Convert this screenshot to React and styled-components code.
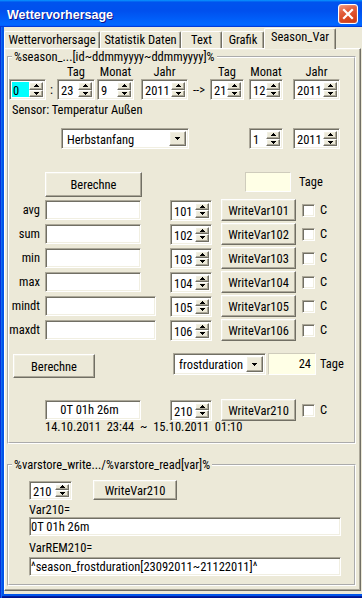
import React from "react";
import styled, { createGlobalStyle, css } from "styled-components";

const GlobalStyle = createGlobalStyle`
  * { box-sizing: border-box; }
  html, body { margin: 0; padding: 0; background: #fff; }
  body {
    font-family: Roboto, "Liberation Sans", Arial, sans-serif;
    font-stretch: 75%;
    font-size: 12.5px;
    color: #000;
  }
`;

const raised = css`
  border: 1px solid;
  border-color: #fff #716f64 #716f64 #fff;
  box-shadow: inset -1px -1px 0 #aca899, inset 1px 1px 0 #f1efe2;
  background: #ece9d8;
`;

const sunken = css`
  border: 1px solid;
  border-color: #aca899 #fff #fff #aca899;
  box-shadow: inset 1px 1px 0 #716f64, inset -1px -1px 0 #f1efe2;
`;

const Window = styled.div`
  width: 362px;
  height: 598px;
  display: flex;
  flex-direction: column;
  background: #0055ea;
  box-shadow: inset 1px 0 0 #0831d9, inset 2px 0 0 #166aee, inset 0 -1px 0 #00138c,
    inset 0 -2px 0 #001ea0;
`;

const TitleBar = styled.div`
  flex: none;
  height: 27px;
  display: flex;
  align-items: center;
  justify-content: space-between;
  padding: 0 4px 0 7px;
  background: linear-gradient(180deg, #0997ff, #0053ee 8%, #0050ee 40%, #0066ff 88%, #0066ff 93%, #005bff 95%, #003dd7 96%, #003dd7);
`;

const Title = styled.div`
  font-family: "Liberation Sans", Arial, sans-serif;
  font-stretch: normal;
  font-weight: bold;
  font-size: 12.5px;
  color: #fff;
  padding-top: 2px;
  text-shadow: 1px 1px 0 #0f1089;
`;

const CloseButton = styled.div`
  width: 20px;
  height: 20px;
  margin-top: 1px;
  border: 1px solid #fff;
  border-radius: 3px;
  background: linear-gradient(160deg, #f09a80 0%, #e2603f 35%, #d8461f 70%, #c93a14 100%);
  box-shadow: inset 0 0 1px #fff;
  display: flex;
  align-items: center;
  justify-content: center;
`;

const Body = styled.div`
  flex: 1;
  margin: 0 0 4px 4px;
  background: #ece9d8;
  display: flex;
  flex-direction: column;
`;

const TabStrip = styled.div`
  flex: none;
  height: 21px;
  display: flex;
  align-items: flex-end;
`;

const Tab = styled.div`
  width: ${(p) => p.$w}px;
  height: ${(p) => (p.$active ? 21 : 17)}px;
  margin-bottom: ${(p) => (p.$active ? -1 : 0)}px;
  position: relative;
  z-index: ${(p) => (p.$active ? 1 : 0)};
  background: #ece9d8;
  border: 1px solid;
  border-color: #fff #716f64 transparent #fff;
  border-bottom: none;
  border-radius: 2px 2px 0 0;
  box-shadow: inset -1px 0 0 #aca899;
  text-align: center;
  line-height: ${(p) => (p.$active ? 14 : 16)}px;
  padding-top: ${(p) => (p.$active ? 1 : 0)}px;
  white-space: nowrap;
`;

const Panel = styled.div`
  flex: 1;
  margin: 0 1px 3px 0;
  border: 1px solid;
  border-color: #fff #716f64 #716f64 #fff;
  box-shadow: inset -1px -1px 0 #aca899, inset 1px 1px 0 #f1efe2;
  display: flex;
  flex-direction: column;
`;

const Group = styled.fieldset`
  margin: ${(p) => p.$mt}px 4px 0 2px;
  padding: 0 0 ${(p) => p.$pb}px 0;
  border: 2px groove #fff;
  min-width: 0;
`;

const Legend = styled.legend`
  margin-left: 3px;
  padding: 0 2px;
  line-height: 14px;
`;

const Row = styled.div`
  display: flex;
  align-items: ${(p) => p.$align || "flex-start"};
  height: ${(p) => (p.$h ? `${p.$h}px` : "auto")};
  margin: ${(p) => p.$mt || 0}px 0 0 ${(p) => p.$ml || 0}px;
`;

const DatePart = styled.div`
  display: flex;
  flex-direction: column;
  align-items: center;
  margin-left: ${(p) => p.$ml || 0}px;
`;

const PartLabel = styled.div`
  height: 13px;
  line-height: 11px;
`;

const Sep = styled.div`
  width: ${(p) => p.$w}px;
  margin-top: 13px;
  height: 21px;
  line-height: 21px;
  text-align: center;
`;

const Text = styled.div`
  margin: ${(p) => p.$mt || 0}px 0 0 ${(p) => p.$ml || 0}px;
  line-height: 14px;
  white-space: pre;
`;

const Spin = styled.div`
  ${sunken};
  width: ${(p) => p.$w}px;
  height: ${(p) => p.$h}px;
  margin-left: ${(p) => p.$ml || 0}px;
  padding: 2px;
  background: #fff;
  display: flex;
  flex: none;
`;

const SpinText = styled.div`
  flex: 1;
  padding-left: 1px;
  background: ${(p) => (p.$hl ? "#00ffff" : "#fff")};
  line-height: ${(p) => p.$h}px;
  white-space: nowrap;
`;

const UpDown = styled.div`
  width: 14px;
  display: flex;
  flex-direction: column;
`;

const ArrowBtn = styled.div`
  ${raised};
  flex: 1;
  display: flex;
  align-items: center;
  justify-content: center;
`;

const Combo = styled.div`
  ${sunken};
  width: ${(p) => p.$w}px;
  height: ${(p) => p.$h}px;
  margin-left: ${(p) => p.$ml || 0}px;
  padding: 2px;
  background: #fff;
  display: flex;
  flex: none;
`;

const ComboText = styled.div`
  flex: 1;
  padding-left: 3px;
  line-height: ${(p) => p.$h}px;
  white-space: nowrap;
`;

const ComboBtn = styled.div`
  ${raised};
  width: 17px;
  display: flex;
  align-items: center;
  justify-content: center;
`;

const Button = styled.div`
  ${raised};
  width: ${(p) => p.$w}px;
  height: ${(p) => p.$h}px;
  margin: ${(p) => p.$mt || 0}px 0 0 ${(p) => p.$ml || 0}px;
  display: flex;
  align-items: center;
  justify-content: center;
  flex: none;
`;

const Field = styled.div`
  ${sunken};
  background: #fff;
  width: ${(p) => p.$w}px;
  height: ${(p) => p.$h}px;
  margin-left: ${(p) => p.$ml || 0}px;
  padding: ${(p) => (p.$center ? "0 7px 0 0" : "0 0 0 1px")};
  text-align: ${(p) => (p.$center ? "center" : "left")};
  line-height: ${(p) => p.$h - 2}px;
  white-space: nowrap;
  flex: none;
`;

const Readout = styled.div`
  width: ${(p) => p.$w}px;
  height: ${(p) => p.$h}px;
  margin-left: ${(p) => p.$ml || 0}px;
  background: #ffffe6;
  border: 1px solid;
  border-color: #cfccbc #fff #fff #cfccbc;
  text-align: right;
  padding-right: 4px;
  line-height: ${(p) => p.$h - 2}px;
  flex: none;
`;

const Unit = styled.div`
  margin-left: ${(p) => p.$ml || 0}px;
  line-height: ${(p) => p.$h || 14}px;
`;

const Check = styled.div`
  ${sunken};
  width: 13px;
  height: 13px;
  background: #fff;
  margin-left: ${(p) => p.$ml || 0}px;
  flex: none;
`;

const Stats = styled.div`
  display: flex;
  flex-direction: column;
  gap: 4px;
  margin-top: 2px;
`;

const StatRow = styled.div`
  display: grid;
  grid-template-columns: 31px 130px 42px 84px 19px auto;
  align-items: center;
  height: 20px;
`;

const StatLabel = styled.div`
  text-align: right;
  line-height: 14px;
`;

const Inset = styled.div`
  padding-left: ${(p) => p.$pl}px;
`;

function UpIcon() {
  return (
    <svg width="5" height="3" viewBox="0 0 5 3" shapeRendering="crispEdges">
      <path d="M2 0h1v1h1v1h1v1H0V2h1V1h1z" fill="#000" />
    </svg>
  );
}

function DownIcon() {
  return (
    <svg width="5" height="3" viewBox="0 0 5 3" shapeRendering="crispEdges">
      <path d="M0 0h5v1h-1v1h-1v1h-1v-1h-1v-1h-1z" fill="#000" />
    </svg>
  );
}

function SpinBox({ value, w, h = 21, ml, hl }) {
  return (
    <Spin $w={w} $h={h} $ml={ml}>
      <SpinText $hl={hl} $h={h - 4}>
        {value}
      </SpinText>
      <UpDown>
        <ArrowBtn>
          <UpIcon />
        </ArrowBtn>
        <ArrowBtn>
          <DownIcon />
        </ArrowBtn>
      </UpDown>
    </Spin>
  );
}

function ComboBox({ value, w, h = 21, ml }) {
  return (
    <Combo $w={w} $h={h} $ml={ml}>
      <ComboText $h={h - 4}>{value}</ComboText>
      <ComboBtn>
        <DownIcon />
      </ComboBtn>
    </Combo>
  );
}

const tabs = [
  { label: "Wettervorhersage", w: 96 },
  { label: "Statistik Daten", w: 81 },
  { label: "Text", w: 41 },
  { label: "Grafik", w: 42 },
  { label: "Season_Var", w: 72, active: true },
];

const stats = [
  { label: "avg", n: 101, fw: 96 },
  { label: "sum", n: 102, fw: 96 },
  { label: "min", n: 103, fw: 96 },
  { label: "max", n: 104, fw: 96 },
  { label: "mindt", n: 105, fw: 111 },
  { label: "maxdt", n: 106, fw: 111 },
];

export default function App() {
  return (
    <>
      <GlobalStyle />
      <Window>
        <TitleBar>
          <Title>Wettervorhersage</Title>
          <CloseButton>
            <svg width="12" height="12" viewBox="0 0 12 12">
              <path d="M2 2L10 10M10 2L2 10" stroke="#fff" strokeWidth="2.2" strokeLinecap="square" />
            </svg>
          </CloseButton>
        </TitleBar>
        <Body>
          <TabStrip>
            {tabs.map((t) => (
              <Tab key={t.label} $w={t.w} $active={t.active}>
                {t.label}
              </Tab>
            ))}
          </TabStrip>
          <Panel>
            <Group $mt={1} $pb={8}>
              <Legend>%season_...[id~ddmmyyyy~ddmmyyyy]%</Legend>
              <Row $mt={2}>
                <DatePart>
                  <PartLabel />
                  <SpinBox value="0" w={37} hl />
                </DatePart>
                <Sep $w={11}>:</Sep>
                <DatePart>
                  <PartLabel>Tag</PartLabel>
                  <SpinBox value="23" w={38} />
                </DatePart>
                <DatePart $ml={2}>
                  <PartLabel>Monat</PartLabel>
                  <SpinBox value="9" w={37} />
                </DatePart>
                <DatePart $ml={7}>
                  <PartLabel>Jahr</PartLabel>
                  <SpinBox value="2011" w={47} />
                </DatePart>
                <Sep $w={22}>--&gt;</Sep>
                <DatePart>
                  <PartLabel>Tag</PartLabel>
                  <SpinBox value="21" w={34} />
                </DatePart>
                <DatePart $ml={5}>
                  <PartLabel>Monat</PartLabel>
                  <SpinBox value="12" w={34} />
                </DatePart>
                <DatePart $ml={10}>
                  <PartLabel>Jahr</PartLabel>
                  <SpinBox value="2011" w={47} />
                </DatePart>
              </Row>
              <Text $mt={3} $ml={3}>
                Sensor: Temperatur Außen
              </Text>
              <Row $mt={11}>
                <ComboBox value="Herbstanfang" w={128} ml={52} />
                <SpinBox value="1" w={34} ml={60} />
                <SpinBox value="2011" w={47} ml={10} />
              </Row>
              <Row $mt={23}>
                <Button $w={97} $h={25} $ml={36}>
                  Berechne
                </Button>
                <Readout $w={46} $h={20} $ml={103} />
                <Unit $ml={8} $h={20}>
                  Tage
                </Unit>
              </Row>
              <Stats>
                {stats.map((s) => (
                  <StatRow key={s.label}>
                    <StatLabel>{s.label}</StatLabel>
                    <Field $w={s.fw} $h={20} $ml={5} />
                    <SpinBox value={String(s.n)} w={42} />
                    <Button $w={75} $h={22} $ml={9}>
                      WriteVar{s.n}
                    </Button>
                    <Check $ml={6} />
                    <Unit $ml={5}>C</Unit>
                  </StatRow>
                ))}
              </Stats>
              <Row $mt={14} $h={25}>
                <Button $w={82} $h={24} $ml={4} $mt={1}>
                  Berechne
                </Button>
                <ComboBox value="frostduration" w={93} h={22} ml={78} />
                <Readout $w={48} $h={22} $ml={2}>
                  24
                </Readout>
                <Unit $ml={4} $h={22}>
                  Tage
                </Unit>
              </Row>
              <Row $mt={21} $h={22} $align="center">
                <Field $w={96} $h={20} $ml={36} $center>
                  0T 01h 26m
                </Field>
                <SpinBox value="210" w={42} ml={29} />
                <Button $w={75} $h={22} $ml={9}>
                  WriteVar210
                </Button>
                <Check $ml={6} />
                <Unit $ml={5}>C</Unit>
              </Row>
              <Text $mt={-1} $ml={36}>
                {"14.10.2011  23:44  ~  15.10.2011  01:10"}
              </Text>
            </Group>
            <Group $mt={14} $pb={8}>
              <Legend>%varstore_write.../%varstore_read[var]%</Legend>
              <Inset $pl={20}>
                <Row $mt={8} $h={20} $align="center">
                  <SpinBox value="210" w={43} h={19} />
                  <Button $w={84} $h={20} $ml={21}>
                    WriteVar210
                  </Button>
                </Row>
                <Text $mt={3}>Var210=</Text>
                <Field $w={312} $h={19}>
                  0T 01h 26m
                </Field>
                <Text $mt={5}>VarREM210=</Text>
                <Row $mt={2}>
                  <Field $w={312} $h={19}>
                    ^season_frostduration[23092011~21122011]^
                  </Field>
                </Row>
              </Inset>
            </Group>
          </Panel>
        </Body>
      </Window>
    </>
  );
}
